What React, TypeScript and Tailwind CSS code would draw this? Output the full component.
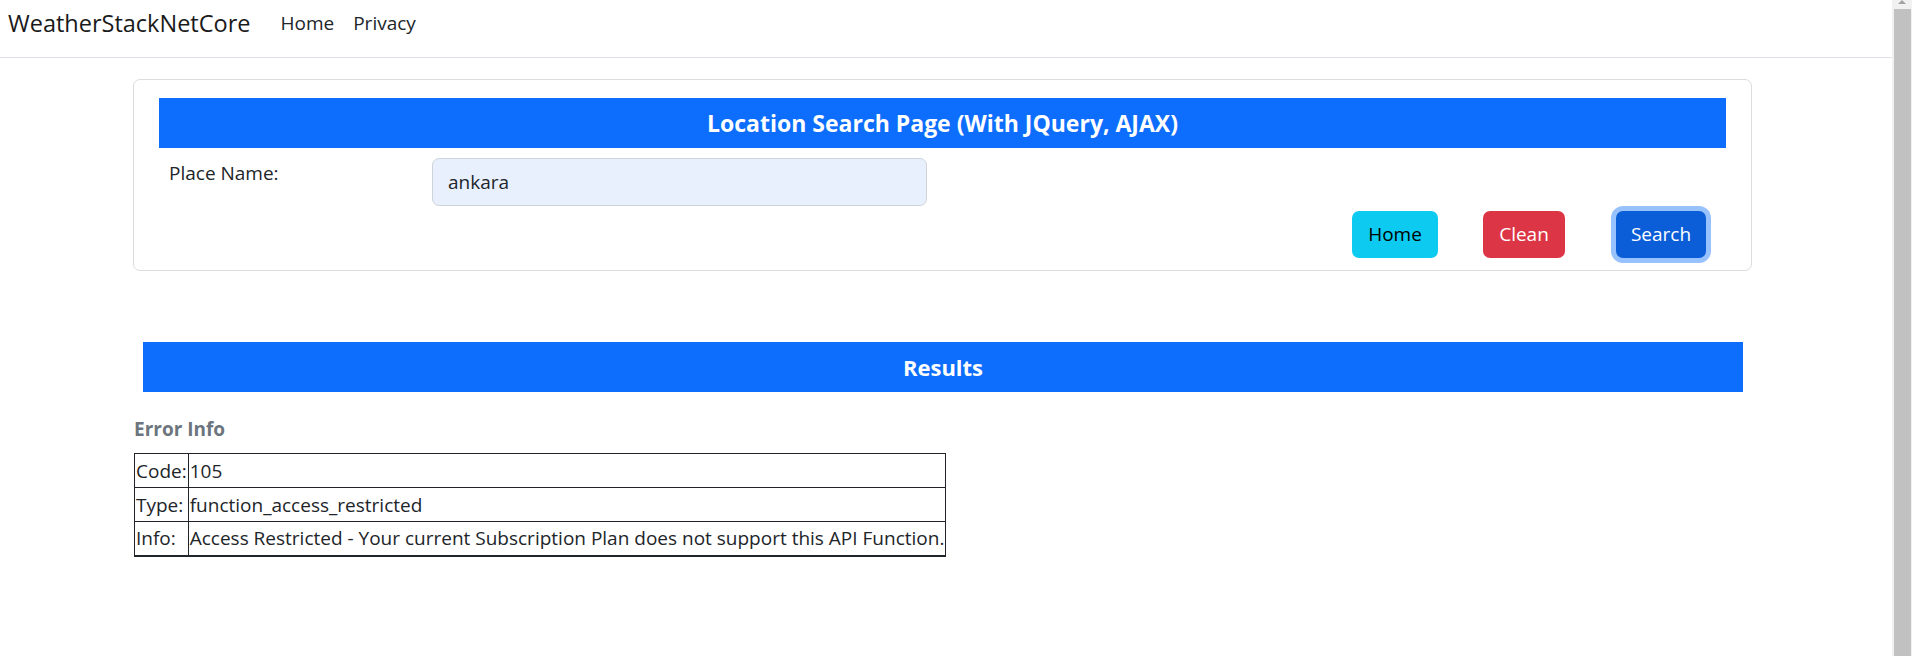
const rows = [
  { label: "Code:", value: "105" },
  { label: "Type:", value: "function_access_restricted" },
  {
    label: "Info:",
    value:
      "Access Restricted - Your current Subscription Plan does not support this API Function.",
  },
];

const App = () => {
  return (
    <div
      className="flex h-[656px] w-full overflow-hidden bg-white text-[#212529]"
      style={{ fontFamily: '"Open Sans", "Noto Sans", sans-serif' }}
    >
      <div className="flex-1 flex flex-col">
        <nav className="h-[58px] flex items-center border-b border-[#dee2e6] pl-[8px] pb-[10px] shrink-0">
          <a className="text-[23.5px] text-[#1a1a1a] mr-[20px] leading-none">
            WeatherStackNetCore
          </a>
          <a className="text-[19px] px-[10px] text-[#212529] leading-none">Home</a>
          <a className="text-[19px] pl-[9px] pr-[10px] text-[#212529] leading-none">Privacy</a>
        </nav>

        <main className="pt-[21px]">
          <section className="ml-[133px] w-[1619px] border border-[#dadce0] rounded-[7px] pt-[18px] px-[25px] pb-[12px]">
            <div className="h-[50px] bg-[#0d6efd] flex items-center justify-center">
              <h5 className="text-white font-bold text-[23px]">
                Location Search Page (With JQuery, AJAX)
              </h5>
            </div>
            <div className="flex mt-[10px]">
              <label className="w-[273px] pl-[10px] text-[19px] leading-[30px]">
                Place Name:
              </label>
              <input
                className="w-[495px] h-[48px] rounded-[7px] border border-[#ced4da] bg-[#e8f0fe] pl-[15px] text-[19px] text-[#212529] outline-none"
                type="text"
                name="place"
                defaultValue="ankara"
              />
            </div>
            <div className="flex justify-end mt-[5px] pr-[20px]">
              <button className="w-[86px] h-[47px] rounded-[7px] bg-[#0dcaf0] text-[19px] text-black">
                Home
              </button>
              <button className="w-[82px] h-[47px] rounded-[7px] bg-[#dc3545] text-[19px] text-white ml-[45px]">
                Clean
              </button>
              <button className="w-[90px] h-[47px] rounded-[7px] bg-[#0b5ed7] text-[19px] text-white ml-[51px] shadow-[0_0_0_5px_#98c2fe]">
                Search
              </button>
            </div>
          </section>

          <section className="mt-[71px]">
            <div className="ml-[143px] w-[1600px] h-[50px] bg-[#0d6efd] flex items-center justify-center">
              <h5 className="text-white font-bold text-[22px]">Results</h5>
            </div>
            <div className="ml-[134px] mt-[25px]">
              <h6 className="text-[19px] font-bold text-[#6c757d] leading-[24px]">
                Error Info
              </h6>
              <table className="mt-[12px] border-collapse border-b-2 border-[#212529] text-[19px]">
                <tbody>
                  {rows.map((r) => (
                    <tr key={r.label}>
                      <td className="border border-[#212529] px-[1px] h-[34px] leading-[30px] whitespace-nowrap">
                        {r.label}
                      </td>
                      <td className="border border-[#212529] px-[1px] h-[34px] leading-[30px] whitespace-nowrap">
                        {r.value}
                      </td>
                    </tr>
                  ))}
                </tbody>
              </table>
            </div>
          </section>
        </main>
      </div>

      <div className="w-[20px] bg-[#f1f1f1] flex flex-col items-stretch shrink-0">
        <div className="h-[9px] flex justify-center items-start">
          <svg width="10" height="4" viewBox="0 0 10 4">
            <polygon points="1,4 9,4 5,0" fill="#a3a3a3" />
          </svg>
        </div>
        <div className="flex-1 ml-[2px] mr-[1px] bg-[#c1c1c1]" />
      </div>
    </div>
  );
};

export default App;
